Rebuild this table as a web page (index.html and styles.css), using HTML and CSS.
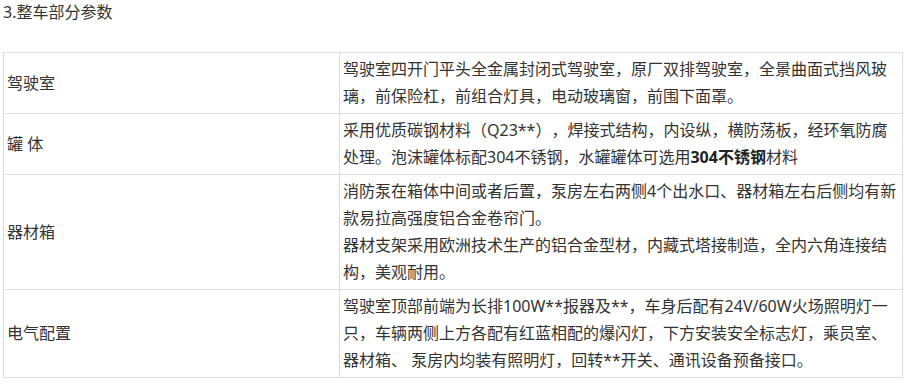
FILE: index.html
```html
<!DOCTYPE html>
<html lang="zh-CN">
<head>
<meta charset="utf-8">
<title>整车部分参数</title>
<link rel="stylesheet" href="styles.css">
</head>
<body>
<p class="title">3.整车部分参数</p>
<table class="params">
  <colgroup><col class="c-name"><col class="c-desc"></colgroup>
  <tbody>
    <tr>
      <td>驾驶室</td>
      <td>驾驶室四开门平头全金属封闭式驾驶室，原厂双排驾驶室，全景曲面式挡风玻璃，前保险杠，前组合灯具，电动玻璃窗，前围下面罩。</td>
    </tr>
    <tr>
      <td>罐 体</td>
      <td>采用优质碳钢材料（Q23**），焊接式结构，内设纵，横防荡板，经环氧防腐处理。泡沫罐体标配304不锈钢，水罐罐体可选用<strong>304不锈钢</strong>材料</td>
    </tr>
    <tr>
      <td>器材箱</td>
      <td>消防泵在箱体中间或者后置，泵房左右两侧4个出水口、器材箱左右后侧均有新款易拉高强度铝合金卷帘门。<br>器材支架采用欧洲技术生产的铝合金型材，内藏式塔接制造，全内六角连接结构，美观耐用。</td>
    </tr>
    <tr>
      <td>电气配置</td>
      <td>驾驶室顶部前端为长排100W**报器及**，车身后配有24V/60W火场照明灯一只，车辆两侧上方各配有红蓝相配的爆闪灯，下方安装安全标志灯，乘员室、器材箱、 泵房内均装有照明灯，回转**开关、通讯设备预备接口。</td>
    </tr>
  </tbody>
</table>
</body>
</html>
```
FILE: styles.css
```css
html, body {
  margin: 0;
  padding: 0;
  background: #fff;
}
body {
  padding: 0 3px;
  font-family: "Noto Sans", "Noto Sans CJK SC", sans-serif;
  font-size: 16px;
  color: #333;
  text-spacing-trim: space-all;
}
.title {
  margin: 0 0 28px;
  line-height: 24px;
}
.params {
  width: 900px;
  border-collapse: collapse;
  table-layout: fixed;
  border: 1px solid #ddd;
}
.c-name { width: 336px; }
.params td {
  border: 1px solid #ddd;
  padding: 3px;
  line-height: 27px;
  vertical-align: middle;
  word-break: break-all;
}
.params strong {
  font-weight: bold;
  color: #222;
}
```
